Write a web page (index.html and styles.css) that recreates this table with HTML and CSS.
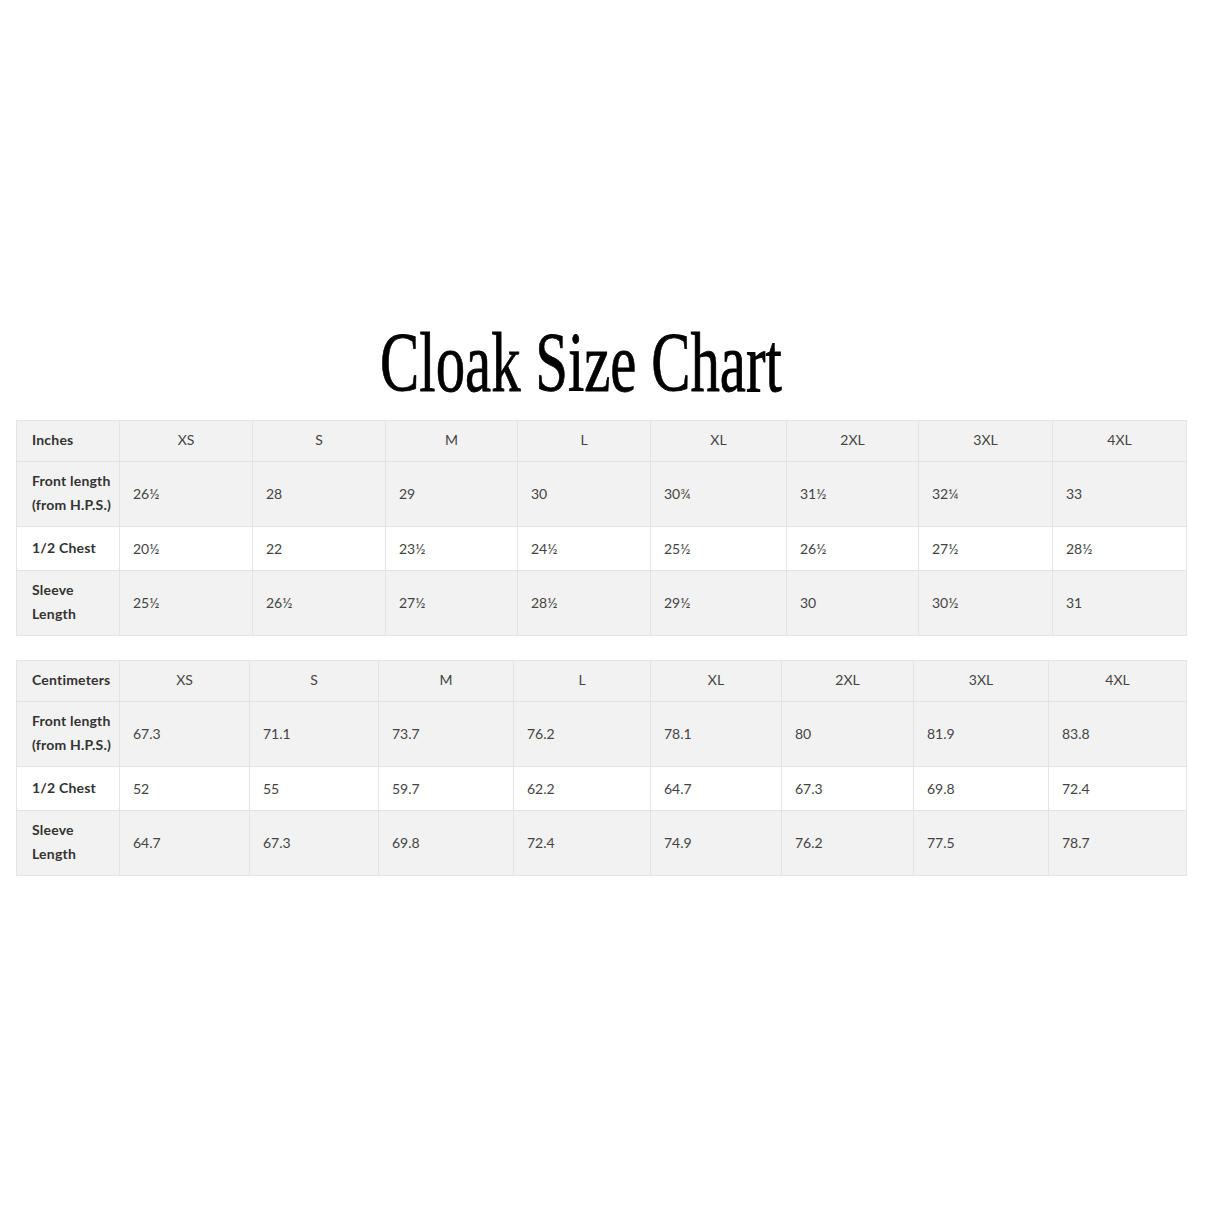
FILE: index.html
```html
<!DOCTYPE html>
<html>
<head>
<meta charset="utf-8">
<link rel="stylesheet" href="styles.css">
</head>
<body>
<div class="page">
  <h1 class="title"><span class="title-text">Cloak Size Chart</span></h1>
  <table class="chart chart-in">
    <tr class="row-head">
      <th class="label">Inches</th><th>XS</th><th>S</th><th>M</th><th>L</th><th>XL</th><th>2XL</th><th>3XL</th><th>4XL</th>
    </tr>
    <tr class="row-tall shade">
      <td class="label">Front length<br>(from H.P.S.)</td><td>26½</td><td>28</td><td>29</td><td>30</td><td>30¾</td><td>31½</td><td>32¼</td><td>33</td>
    </tr>
    <tr class="row-short">
      <td class="label">1/2 Chest</td><td>20½</td><td>22</td><td>23½</td><td>24½</td><td>25½</td><td>26½</td><td>27½</td><td>28½</td>
    </tr>
    <tr class="row-tall shade">
      <td class="label">Sleeve<br>Length</td><td>25½</td><td>26½</td><td>27½</td><td>28½</td><td>29½</td><td>30</td><td>30½</td><td>31</td>
    </tr>
  </table>
  <table class="chart chart-cm">
    <tr class="row-head">
      <th class="label">Centimeters</th><th>XS</th><th>S</th><th>M</th><th>L</th><th>XL</th><th>2XL</th><th>3XL</th><th>4XL</th>
    </tr>
    <tr class="row-tall shade">
      <td class="label">Front length<br>(from H.P.S.)</td><td>67.3</td><td>71.1</td><td>73.7</td><td>76.2</td><td>78.1</td><td>80</td><td>81.9</td><td>83.8</td>
    </tr>
    <tr class="row-short">
      <td class="label">1/2 Chest</td><td>52</td><td>55</td><td>59.7</td><td>62.2</td><td>64.7</td><td>67.3</td><td>69.8</td><td>72.4</td>
    </tr>
    <tr class="row-tall shade">
      <td class="label">Sleeve<br>Length</td><td>64.7</td><td>67.3</td><td>69.8</td><td>72.4</td><td>74.9</td><td>76.2</td><td>77.5</td><td>78.7</td>
    </tr>
  </table>
</div>
</body>
</html>
```

FILE: styles.css
```css
html, body {
  margin: 0;
  padding: 0;
  background: #ffffff;
}

.page {
  padding: 320px 32px 0 16px;
}

.title {
  margin: 0 0 14px 0;
  height: 86px;
  text-align: center;
  padding-right: 40px;
  font-family: "Liberation Serif", serif;
  font-weight: normal;
  font-size: 84px;
  line-height: 86px;
  color: #000;
}

.title-text {
  display: inline-block;
  transform: scaleX(0.7);
  -webkit-text-stroke: 0.8px #000;
}

.chart {
  width: 1170px;
  border-collapse: collapse;
  table-layout: fixed;
  font-family: "Lato", sans-serif;
  font-size: 14px;
  color: #444;
  margin-bottom: 24px;
}

.chart th,
.chart td {
  box-sizing: border-box;
  border: 1px solid #e3e3e3;
  padding: 0 0 0 13px;
  vertical-align: middle;
  line-height: 24px;
  font-weight: 400;
  text-align: left;
}

.chart th {
  text-align: center;
  padding: 0 0 2px 0;
}

.chart .label {
  text-align: left;
  padding-left: 15px;
  font-weight: 700;
  letter-spacing: 0.2px;
  color: #333;
}

.chart td.label {
  padding-bottom: 2px;
}

.row-head { height: 41px; background: #f2f2f2; }
.row-tall { height: 65px; }
.row-short { height: 44px; background: #ffffff; }
.shade { background: #f2f2f2; }

.chart-in th:nth-child(1) { width: 103px; }
.chart-in th:nth-child(2) { width: 133px; }
.chart-in th:nth-child(3) { width: 133px; }
.chart-in th:nth-child(4) { width: 132px; }
.chart-in th:nth-child(5) { width: 133px; }
.chart-in th:nth-child(6) { width: 136px; }
.chart-in th:nth-child(7) { width: 132px; }
.chart-in th:nth-child(8) { width: 134px; }
.chart-in th:nth-child(9) { width: 134px; }

.chart-cm th:nth-child(1) { width: 103px; }
.chart-cm th:nth-child(2) { width: 130px; }
.chart-cm th:nth-child(3) { width: 129px; }
.chart-cm th:nth-child(4) { width: 135px; }
.chart-cm th:nth-child(5) { width: 137px; }
.chart-cm th:nth-child(6) { width: 131px; }
.chart-cm th:nth-child(7) { width: 132px; }
.chart-cm th:nth-child(8) { width: 135px; }
.chart-cm th:nth-child(9) { width: 138px; }
```
